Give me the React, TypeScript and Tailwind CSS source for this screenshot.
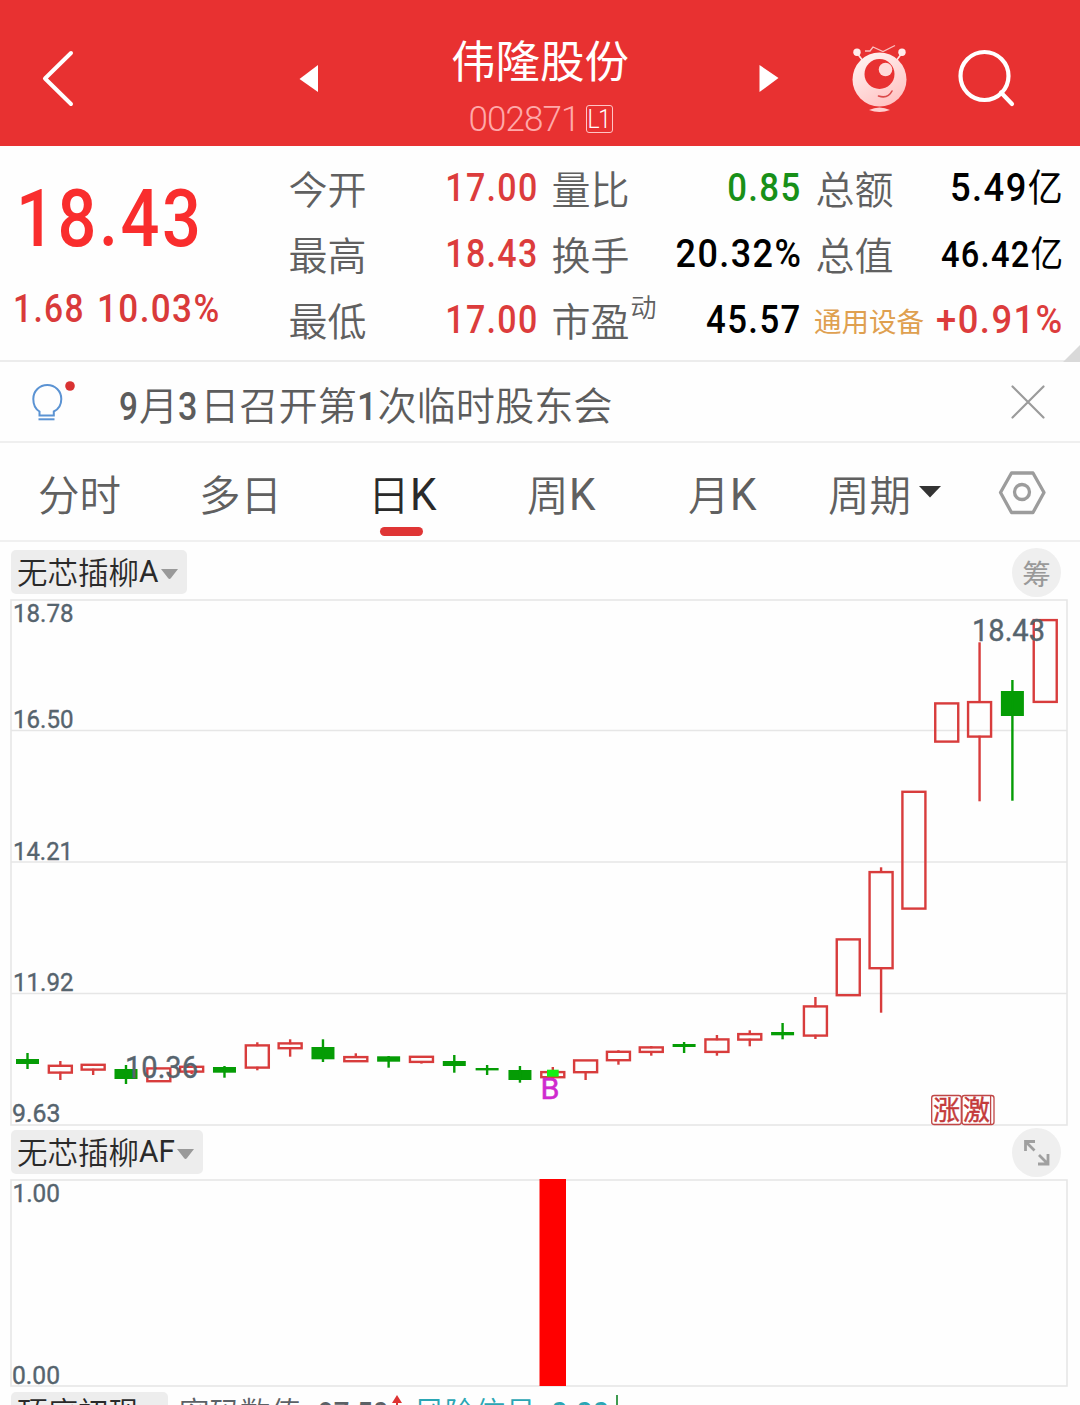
import React from "react";

const CJK = "font-['Noto_Sans_CJK_SC',sans-serif]";
const NUM = "font-['Roboto','Noto_Sans_CJK_SC',sans-serif] font-medium";

type Candle = [up: boolean, high: number, top: number, bottom: number, low: number];

const candles: Candle[] = [
  [false, 1053, 1059, 1064, 1069],
  [true, 1061, 1064.7, 1073.7, 1080],
  [true, 1063.7, 1063.7, 1070.7, 1075],
  [false, 1065, 1069, 1079, 1084],
  [true, 1067.3, 1067.3, 1082.3, 1082.3],
  [true, 1065.7, 1065.7, 1072.7, 1074],
  [false, 1066, 1067, 1072.7, 1077.7],
  [true, 1042.3, 1044.3, 1068.7, 1070.3],
  [true, 1039.3, 1042.3, 1049.3, 1056.7],
  [false, 1039.3, 1047, 1059.3, 1062],
  [true, 1053.3, 1056, 1062.3, 1062.3],
  [false, 1056, 1056.3, 1061.7, 1067.7],
  [true, 1055.7, 1055.7, 1063, 1063.6],
  [false, 1055, 1061, 1066, 1072.7],
  [false, 1065, 1068, 1070.4, 1075],
  [false, 1066, 1070, 1080, 1082.7],
  [true, 1067, 1071, 1078.3, 1080],
  [true, 1059.3, 1059.3, 1073.3, 1080],
  [true, 1050.2, 1050.7, 1061.3, 1064.7],
  [true, 1046, 1046.3, 1053, 1055.7],
  [false, 1042, 1044, 1047, 1053],
  [true, 1035, 1038.3, 1053, 1055.7],
  [true, 1030.3, 1033, 1040.7, 1046.3],
  [false, 1023, 1032, 1035.3, 1039.3],
  [true, 997, 1005.3, 1036.7, 1039],
  [true, 938.3, 938.3, 996.3, 996.3],
  [true, 867.3, 871, 969.3, 1012.7],
  [true, 790.7, 790.7, 909.7, 909.7],
  [true, 702.3, 702.3, 742.7, 742.7],
  [true, 642.3, 701, 737.7, 801.3],
  [false, 680, 691, 716, 800.7],
  [true, 619, 619, 703, 703],
];

function CandleMark({ c, i }: { c: Candle; i: number }) {
  const [up, high, top, bottom, low] = c;
  const x = 27.5 + i * 32.83;
  if (!up) {
    return (
      <g fill="#059c05">
        <rect x={x - 11.5} y={top} width={23} height={bottom - top} />
        <rect x={x - 1.2} y={high} width={2.4} height={low - high} />
      </g>
    );
  }
  return (
    <g stroke="#d83c3c" strokeWidth={2.4} fill="none">
      <rect x={x - 11.5} y={top + 1.1} width={23} height={bottom - top - 2.2} />
      {high < top && <line x1={x} x2={x} y1={high} y2={top + 2} />}
      {low > bottom && <line x1={x} x2={x} y1={bottom - 2} y2={low} />}
    </g>
  );
}

function AxisText({ x, y, w, children }: { x: number; y: number; w: number; children: string }) {
  return (
    <text x={x} y={y} textLength={w} lengthAdjust="spacingAndGlyphs" fontSize="26.5" fill="#56646e" stroke="#56646e" strokeWidth="0.4" fontFamily="Roboto, sans-serif">
      {children}
    </text>
  );
}

function Label({ children }: { children: React.ReactNode }) {
  return <span className={`${CJK} -ml-[0.5px] text-[39px] leading-[67px] font-[350] text-[#606060] whitespace-nowrap`}>{children}</span>;
}

function Value({ children, className }: { children: React.ReactNode; className: string }) {
  return <span className={`${NUM} mt-[4px] origin-right text-[39.5px] leading-[60px] tracking-[0.04em] whitespace-nowrap ${className}`}>{children}</span>;
}

function Row({ children }: { children: React.ReactNode }) {
  return <div className="flex h-[66px] items-start justify-between">{children}</div>;
}

function Header() {
  return (
    <header className="flex h-[146px] items-start bg-[#e83131] text-white">
      <svg width="290" height="146" fill="none" stroke="#fff" strokeWidth="4" strokeLinecap="round" strokeLinejoin="round">
        <path d="M71 53 L45 78.500 L71 104" />
      </svg>
      <svg width="110" height="146" fill="#fff"><path d="M9.500 79 L28 65 V92 Z" /></svg>
      <div className="flex w-[280px] flex-col items-center">
        <h1 className={`${CJK} mt-[26px] h-[66px] text-[44.500px] leading-[66px] font-normal`}>伟隆股份</h1>
        <div className="mt-[7px] flex h-[40px] items-center">
          <span className="mt-[2px] ml-px font-['Roboto',sans-serif] text-[35px] leading-[40px] font-light tracking-[-0.9px] text-[#ffa9a9]">002871</span>
          <span className="ml-[6px] flex h-[28px] w-[27px] items-center justify-center rounded-[3px] border border-[#ffc5c5] font-['Roboto',sans-serif] text-[26px] leading-[26px] font-light tracking-[-1.5px]">
            <span className="origin-center scale-x-[0.88]">L1</span>
          </span>
        </div>
      </div>
      <svg width="150" height="146" fill="#fff"><path d="M79.500 65 V92 L98.500 78 Z" /></svg>
      <svg width="100" height="146" viewBox="830 0 100 146" fill="none">
        <defs>
          <linearGradient id="bodyShade" x1="0.2" y1="0" x2="0.8" y2="1">
            <stop offset="0" stopColor="#fff3f2" />
            <stop offset="1" stopColor="#ffc0c0" />
          </linearGradient>
        </defs>
        <g stroke="#ffe3e3">
          <path d="M857 53 l6 8 M902 53 l-6 8" strokeWidth="1.600" />
          <path d="M865 51 h5 l3 -4 10 4.500 12 -6" strokeWidth="1.300" strokeOpacity=".8" />
        </g>
        <circle cx="857" cy="52.300" r="3.700" fill="#ffeded" />
        <circle cx="902" cy="52.300" r="3.700" fill="#ffeded" />
        <circle cx="879.500" cy="79.500" r="27" fill="url(#bodyShade)" />
        <circle cx="879.500" cy="74" r="15" fill="#e83131" />
        <circle cx="885.500" cy="69.500" r="6.800" fill="#ffd9d8" />
        <path d="M878.500 96 Q888 99 892 91" stroke="#db4a4a" strokeWidth="1.600" strokeLinecap="round" />
        <path d="M869 110 q10.500 -5 21 0 q-10.500 4 -21 0Z" fill="#ffd0d0" />
      </svg>
      <svg width="150" height="146" viewBox="930 0 150 146" fill="none" stroke="#fff" strokeWidth="4.200" strokeLinecap="round">
        <circle cx="984.500" cy="76" r="24" />
        <path d="M1001 92.500 L1012 104" />
      </svg>
    </header>
  );
}

function Quote() {
  return (
    <section className="relative flex h-[216px] border-b-2 border-[#ececec] pt-[8px]">
      <div className={`${NUM} w-[289px] whitespace-nowrap`}>
        <div className="mt-[13px] ml-[16px] h-[104px] origin-left scale-x-[0.855] text-[80px] leading-[104px] tracking-[0.038em] text-[#f92d2d]">18.43</div>
        <div className="mt-[16px] ml-[13px] flex h-[44px] text-[38.500px] leading-[44px] tracking-[0.04em] text-[#d93a3a]">
          <span className="w-[84px] origin-left scale-x-[0.87]">1.68</span>
          <span className="origin-left scale-x-[0.91]">10.03%</span>
        </div>
      </div>
      <div className="w-[250px]">
        <Row><Label>今开</Label><Value className="text-[#dc3c3c] scale-x-[0.86]">17.00</Value></Row>
        <Row><Label>最高</Label><Value className="text-[#dc3c3c] scale-x-[0.86]">18.43</Value></Row>
        <Row><Label>最低</Label><Value className="text-[#dc3c3c] scale-x-[0.86]">17.00</Value></Row>
      </div>
      <div className="ml-[13px] w-[250px]">
        <Row><Label>量比</Label><Value className="text-[#189018] scale-x-[0.88]">0.85</Value></Row>
        <Row><Label>换手</Label><Value className="text-black scale-x-[0.91]">20.32%</Value></Row>
        <Row>
          <div className="flex">
            <Label>市盈</Label>
            <span className={`${CJK} ml-px text-[26px] leading-[40px] font-[350] text-[#606060]`}>动</span>
          </div>
          <Value className="text-black scale-x-[0.88]">45.57</Value>
        </Row>
      </div>
      <div className="ml-[14px] w-[248px]">
        <Row><Label>总额</Label><Value className="text-black scale-x-[0.92]">5.49<span className="text-[38px] font-normal">亿</span></Value></Row>
        <Row><Label>总值</Label><Value className="pt-px text-black scale-x-[0.905] !text-[36px]">46.42<span className="text-[36px] font-normal">亿</span></Value></Row>
        <Row>
          <span className={`${CJK} -ml-[2px] pt-px text-[27.500px] leading-[66px] font-normal whitespace-nowrap text-[#dfa050]`}>通用设备</span>
          <Value className="text-[#dc3c3c] scale-x-[0.92]">+0.91%</Value>
        </Row>
      </div>
      <svg className="absolute right-0 bottom-[-2px]" width="17" height="17"><path d="M17 0V17H0Z" fill="#d9d9d9" /></svg>
    </section>
  );
}

function Notice() {
  return (
    <section className="flex h-[81px] items-center border-b-2 border-[#efefef]">
      <svg width="119" height="79" viewBox="0 362 119 79" fill="none" stroke="#5b93d3" strokeWidth="2">
        <path d="M39.500 415.500 V411.500 C34.500 408.500 33.300 404.500 33.300 399 C33.300 391 39.500 385 47.300 385 C55.100 385 61.300 391 61.300 399 C61.300 404.500 60 408.500 53.800 411.500 V415.500 Z" />
        <path d="M38.500 419.300 H54.500" />
        <circle cx="70" cy="386" r="4.800" fill="#d93232" stroke="none" />
      </svg>
      <p className={`${CJK} mt-[7px] flex-1 text-[39.200px] leading-[60px] font-[350] whitespace-nowrap text-[#5c5c5c]`}>
        <span className="inline-block w-[20px] origin-left scale-x-[0.85] font-['Roboto'] font-medium">9</span>月<span className="inline-block w-[22px] origin-left scale-x-[0.87] font-['Roboto'] font-medium">3</span>日召开第<span className="inline-block w-[20.500px] origin-left scale-x-[0.9] font-['Roboto'] font-medium">1</span>次临时股东会
      </p>
      <svg width="80" height="79" viewBox="1000 362 80 79" stroke="#9b9b9b" strokeWidth="2.200" strokeLinecap="round">
        <path d="M1012.500 386.500 L1043.500 417.500 M1043.500 386.500 L1012.500 417.500" />
      </svg>
    </section>
  );
}

function Tab({ children, className }: { children: React.ReactNode; className: string }) {
  return <div className={`${CJK} -mt-[3px] mb-[3px] h-[62px] text-[41.500px] leading-[62px] font-[350] whitespace-nowrap ${className}`}>{children}</div>;
}

const K = () => <span className="relative -top-px inline-block origin-left scale-x-[0.96] font-['Roboto'] text-[44px] leading-[44px] font-normal">K</span>;

function Tabs() {
  return (
    <nav className="flex h-[99px] items-start border-b-2 border-[#f0f0f0] pt-[22px] text-[#606060]">
      <Tab className="ml-[38px] w-[161px]">分时</Tab>
      <Tab className="w-[169px]">多日</Tab>
      <div className="w-[159px]">
        <Tab className="text-[#2a2a2a]">日<K /></Tab>
        <div className="ml-[12px] h-[9px] w-[43px] rounded-full bg-[#df3535]" />
      </div>
      <Tab className="w-[161px]">周<K /></Tab>
      <Tab className="w-[140px]">月<K /></Tab>
      <Tab className="w-[90px]">周期</Tab>
      <svg width="162" height="76" viewBox="918 464 162 76" fill="none">
        <path d="M919 485 H941 L930 496.500 Z" fill="#333" />
        <path d="M1011.500 472 H1033 L1044 491.500 L1033 511.500 H1011.500 L1000.500 491.500 Z" stroke="#9c9c9c" strokeWidth="3.300" strokeLinejoin="round" />
        <circle cx="1022" cy="491" r="7.500" stroke="#9c9c9c" strokeWidth="3.300" />
      </svg>
    </nav>
  );
}

function Chip({ latin, children, className }: { latin: string; children: string; className: string }) {
  return (
    <button className={`flex h-[44px] items-center justify-between rounded-[5px] bg-[#ededed] pr-[9px] pl-[6px] text-[30.500px] font-[350] whitespace-nowrap text-[#2a2a2a] ${CJK} ${className}`}>
      <span className="-mt-[3px] flex leading-[40px]">
        {children}
        <span className="w-0 origin-left scale-x-[0.93] font-['Roboto'] text-[32px] font-normal">{latin}</span>
      </span>
      <svg className="mt-[4px]" width="17" height="11"><path d="M0 0H17L10 9Q8.500 11 7 9Z" fill="#999" /></svg>
    </button>
  );
}

function MainChart() {
  return (
    <svg className="block" width="1080" height="528" viewBox="0 599 1080 528">
      <g fill="none" stroke="#e6e6e6">
        <rect x="11" y="600" width="1056" height="525" strokeWidth="1.600" />
        <path d="M11 730.500H1067M11 862H1067M11 993.500H1067" strokeWidth="1.300" />
      </g>
      {candles.map((c, i) => <CandleMark key={i} c={c} i={i} />)}
      <rect x="547" y="1069.700" width="11.700" height="7" fill="#12f012" />
      <text x="540.500" y="1099" fontSize="30" fill="#cf2acf" stroke="#cf2acf" strokeWidth="0.5" fontFamily="Roboto, sans-serif" textLength="19" lengthAdjust="spacingAndGlyphs">B</text>
      <AxisText x={13} y={622} w={60.5}>18.78</AxisText>
      <AxisText x={13} y={728} w={60.5}>16.50</AxisText>
      <AxisText x={13} y={860} w={60}>14.21</AxisText>
      <AxisText x={13} y={991} w={60.5}>11.92</AxisText>
      <AxisText x={12} y={1122} w={48.5}>9.63</AxisText>
      <g fontFamily="Roboto, sans-serif" fontSize="30.500" fill="#56646e" stroke="#56646e" strokeWidth="0.4">
        <text x="972" y="640.500" textLength="73" lengthAdjust="spacingAndGlyphs">18.43</text>
        <text x="125" y="1077.500" textLength="73" lengthAdjust="spacingAndGlyphs">10.36</text>
      </g>
      <g fill="none" stroke="#c04646" strokeWidth="1.300">
        <rect x="931.700" y="1095.500" width="29.600" height="29" rx="2.500" />
        <rect x="962" y="1095.500" width="32" height="29" rx="2.500" />
        <path d="M990.600 1095.500V1124" />
      </g>
      <g fill="#c43a3a" stroke="#c43a3a" strokeWidth="0.4" fontSize="27" fontFamily="Noto Sans CJK SC, sans-serif">
        <text x="933" y="1119.500">涨</text>
        <text x="963" y="1119.500">激</text>
      </g>
    </svg>
  );
}

function SubChart() {
  return (
    <svg className="block" width="1080" height="209" viewBox="0 1178 1080 209">
      <rect x="11" y="1180" width="1056" height="206" fill="none" stroke="#e6e6e6" strokeWidth="1.600" />
      <rect x="539.500" y="1179" width="26.500" height="207" fill="#f00" />
      <AxisText x={12.5} y={1202} w={47.5}>1.00</AxisText>
      <AxisText x={12} y={1384} w={48}>0.00</AxisText>
    </svg>
  );
}

function Footer() {
  return (
    <div className={`flex h-[18px] items-start overflow-hidden pt-[5px] pl-[11px] text-[30.500px] leading-[38px] font-[350] whitespace-nowrap ${CJK}`}>
      <div className="h-[44px] w-[157px] rounded-[5px] bg-[#ededed] pl-[6px] text-[#2a2a2a]">顶底初现</div>
      <span className="ml-[11px] w-[139px] text-[#5c6166]">密码数值</span>
      <span className="mt-[2px] w-[71px] origin-left scale-x-[0.92] font-['Roboto'] text-[30px] font-medium text-[#5c6166]">97.50</span>
      <svg className="mt-[3px]" width="14" height="14"><path d="M8 0L13 8H9V14H7V8H3Z" fill="#d33" /></svg>
      <span className="ml-[11px] w-[137px] text-[#2ba6b4]">风险信号</span>
      <span className="mt-[2px] w-[63px] origin-left scale-x-[0.98] font-['Roboto'] text-[30px] font-medium text-[#2ba6b4]">0.00</span>
      <svg className="mt-[3px]" width="6" height="14"><path d="M3 0V14" stroke="#3f9b50" strokeWidth="2" /></svg>
    </div>
  );
}

export default function App() {
  return (
    <main className="h-[1405px] w-[1080px] overflow-hidden bg-[#fefefe]">
      <Header />
      <Quote />
      <Notice />
      <Tabs />
      <div className="flex h-[57px] items-start justify-between pt-[8px] pr-[19px] pl-[11px]">
        <Chip latin="A" className="w-[176px]">无芯插柳</Chip>
        <div className={`-mt-[2px] flex size-[49px] items-center justify-center rounded-full bg-[#efefef] text-[28.500px] leading-[49px] text-[#999] ${CJK}`}>筹</div>
      </div>
      <MainChart />
      <div className="flex h-[51px] items-start justify-between pt-[3px] pr-[19px] pl-[11px]">
        <Chip latin="AF" className="w-[192px]">无芯插柳</Chip>
        <svg className="-mt-[2px]" width="49" height="49" viewBox="0 0 49 49" fill="none" stroke="#a0a0a0" strokeWidth="2.800">
          <circle cx="24.500" cy="24.500" r="24.500" fill="#efefef" stroke="none" />
          <path d="M23 13.500H13.500V23M14 14L22.500 22.500M36 26V36H26M35.500 35.500L27 27" />
        </svg>
      </div>
      <SubChart />
      <Footer />
    </main>
  );
}
